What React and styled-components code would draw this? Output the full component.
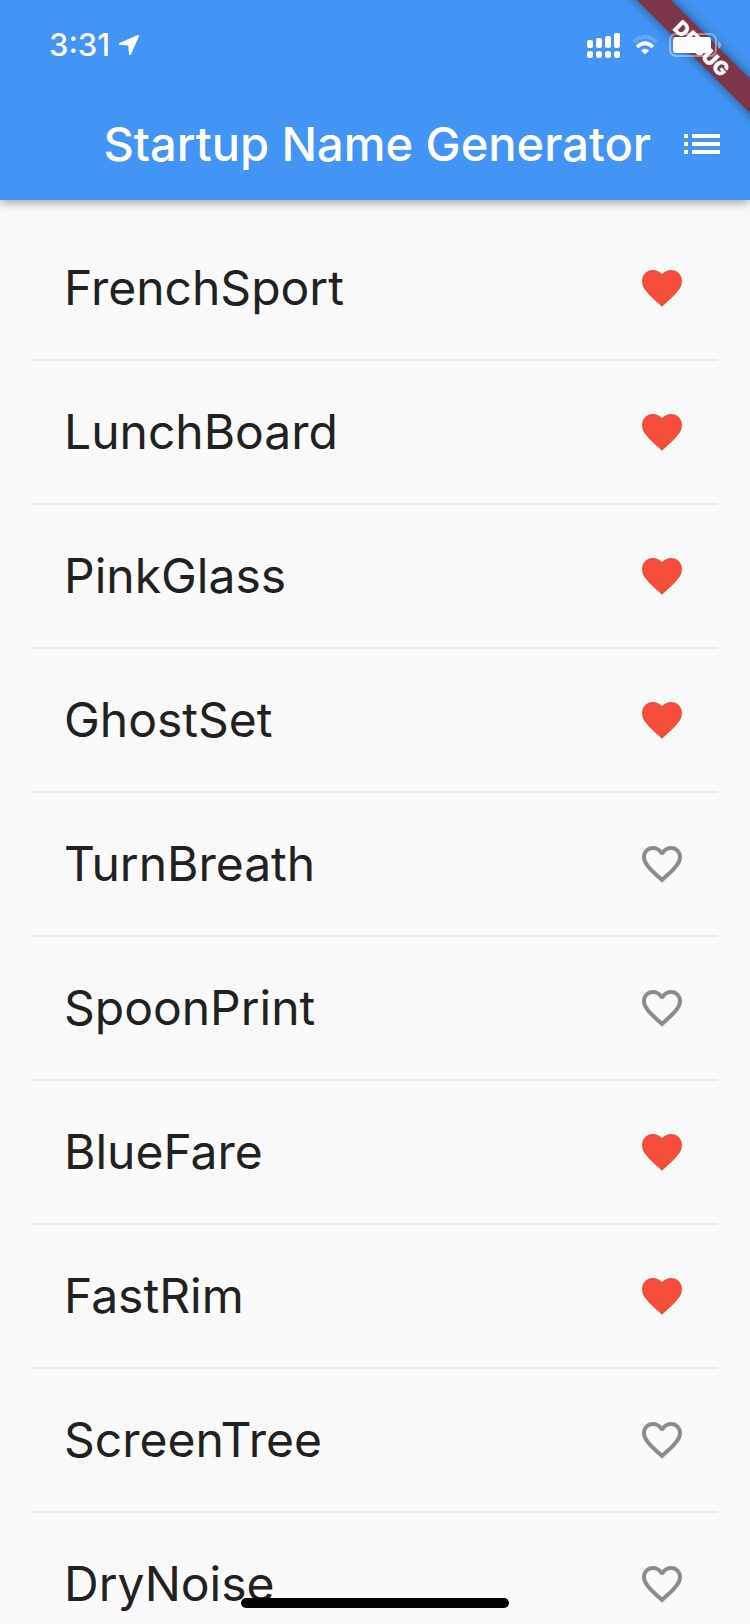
import React, { useState } from "react";
import styled, { createGlobalStyle } from "styled-components";

const GlobalStyle = createGlobalStyle`
  * { box-sizing: border-box; }
  html, body, #root { height: 100%; }
  body {
    margin: 0;
    background: #fafafa;
    font-family: Inter, "Liberation Sans", sans-serif;
    color: #212121;
  }
`;

const Screen = styled.div`
  position: relative;
  display: flex;
  flex-direction: column;
  height: 100vh;
  overflow: hidden;
`;

const Header = styled.header`
  position: relative;
  z-index: 1;
  flex: none;
  background: #4295f5;
  color: #fff;
  box-shadow: 0 2px 10px rgba(0, 0, 0, 0.4);
`;

const BannerCorner = styled.div`
  position: absolute;
  top: 0;
  right: 0;
  width: 160px;
  height: 160px;
  overflow: hidden;
  pointer-events: none;
`;

const Banner = styled.div`
  position: absolute;
  top: 36px;
  right: -52px;
  width: 200px;
  height: 24px;
  transform: rotate(45deg);
  background: #7d3549;
  box-shadow: 0 0 12px rgba(0, 0, 0, 0.5);
  font-size: 20px;
  line-height: 27px;
  font-weight: 900;
  text-align: center;
`;

const StatusBar = styled.div`
  position: relative;
  display: flex;
  align-items: center;
  justify-content: space-between;
  height: 88px;
  padding: 2px 28px 0 49px;
`;

const StatusGroup = styled.div`
  display: flex;
  align-items: center;
  gap: ${(p) => p.$gap}px;
`;

const Clock = styled.time`
  font-size: 31px;
  line-height: 36px;
  font-weight: 500;
`;

const Toolbar = styled.div`
  position: relative;
  display: flex;
  align-items: center;
  justify-content: flex-end;
  gap: 27px;
  height: 112px;
  padding-right: 24px;
`;

const Title = styled.h1`
  margin: 0;
  font-size: 47px;
  line-height: 60px;
  font-weight: 500;
  white-space: nowrap;
`;

const IconButton = styled.button`
  display: flex;
  padding: 0;
  border: 0;
  background: none;
  color: ${(p) => p.$color};
  cursor: pointer;
`;

const NameList = styled.ul`
  margin: 0;
  padding: 17px 32px 0;
  list-style: none;
`;

const NameRow = styled.li`
  display: flex;
  align-items: center;
  justify-content: space-between;
  height: 144px;
  padding: 0 32px;
  border-bottom: 2px solid #ebebeb;
`;

const Name = styled.span`
  font-size: 48px;
  line-height: 56px;
`;

const HomeIndicator = styled.div`
  position: absolute;
  z-index: 2;
  bottom: 16px;
  left: 50%;
  width: 268px;
  height: 10px;
  transform: translateX(-50%);
  border-radius: 5px;
  background: #000;
`;

const HEART =
  "M12 21.35l-1.45-1.32C5.4 15.36 2 12.28 2 8.5 2 5.42 4.42 3 7.5 3c1.74 0 3.41.81 4.5 2.09C13.09 3.81 14.76 3 16.5 3 19.58 3 22 5.42 22 8.5c0 3.78-3.4 6.86-8.55 11.54L12 21.35z";
const HEART_OUTLINE =
  "M16.5 3c-1.74 0-3.41.81-4.5 2.09C10.91 3.81 9.24 3 7.5 3 4.42 3 2 5.42 2 8.5c0 3.78 3.4 6.86 8.55 11.54L12 21.35l1.45-1.32C18.6 15.36 22 12.28 22 8.5 22 5.42 19.58 3 16.5 3zm-4.4 15.55l-.1.1-.1-.1C7.14 14.24 4 11.39 4 8.5 4 6.5 5.5 5 7.5 5c1.54 0 3.04.99 3.57 2.36h1.87C13.46 5.99 14.96 5 16.5 5c2 0 3.5 1.5 3.5 3.5 0 2.89-3.14 5.74-7.9 10.05z";
const LIST =
  "M3 13h2v-2H3v2zm0 4h2v-2H3v2zm0-8h2V7H3v2zm4 4h14v-2H7v2zm0 4h14v-2H7v2zM7 7v2h14V7H7z";

const MaterialIcon = ({ path }) => (
  <svg width="48" height="48" viewBox="0 0 24 24" fill="currentColor" aria-hidden="true">
    <path d={path} />
  </svg>
);

const LocationIcon = () => (
  <svg width="22" height="22" viewBox="0 0 22 22" fill="#fff" stroke="#fff" strokeWidth="2" strokeLinejoin="round" aria-hidden="true">
    <path d="M20 2 2 9.800l9.200.9.800 9.300z" />
  </svg>
);

const SignalIcon = () => (
  <svg width="34" height="26" viewBox="0 0 34 26" fill="#fff" aria-hidden="true">
    {[8, 6, 4, 1].map((top, i) => (
      <g key={top}>
        <rect x={i * 9} y={top} width="6" height={16 - top} rx="2" />
        <rect x={i * 9} y="19" width="6" height="7" rx="2.500" />
      </g>
    ))}
  </svg>
);

const WifiIcon = () => (
  <svg width="26" height="20" viewBox="0 0 26 20" fill="none" aria-hidden="true">
    <path d="M1.500 7Q13-3.500 24.500 7" stroke="#62a9fa" strokeWidth="4" />
    <path d="M5 12Q13 4.500 21 12" stroke="#fff" strokeWidth="3.600" />
    <path d="M9 15.500Q13 12 17 15.500L13 19.500z" fill="#fff" />
  </svg>
);

const BatteryIcon = () => (
  <svg width="53" height="24" viewBox="0 0 53 24" aria-hidden="true">
    <rect x="1" y="1" width="46" height="22" rx="6" fill="none" stroke="#fff" strokeOpacity=".4" strokeWidth="2" />
    <rect x="4" y="4" width="38" height="16" rx="3" fill="#fff" />
    <path d="M49 8c4 1 4 7 0 8z" fill="#fff" fillOpacity=".4" />
  </svg>
);

const NAMES = [
  ["FrenchSport", true],
  ["LunchBoard", true],
  ["PinkGlass", true],
  ["GhostSet", true],
  ["TurnBreath", false],
  ["SpoonPrint", false],
  ["BlueFare", true],
  ["FastRim", true],
  ["ScreenTree", false],
  ["DryNoise", false],
];

function NameItem({ name, initiallySaved }) {
  const [saved, setSaved] = useState(initiallySaved);
  return (
    <NameRow>
      <Name>{name}</Name>
      <IconButton
        type="button"
        $color={saved ? "#f44e3b" : "#8c8c8c"}
        aria-label={`Save ${name}`}
        aria-pressed={saved}
        onClick={() => setSaved(!saved)}
      >
        <MaterialIcon path={saved ? HEART : HEART_OUTLINE} />
      </IconButton>
    </NameRow>
  );
}

export default function App() {
  return (
    <Screen>
      <GlobalStyle />
      <Header>
        <BannerCorner>
          <Banner>DEBUG</Banner>
        </BannerCorner>
        <StatusBar>
          <StatusGroup $gap={8}>
            <Clock>3:31</Clock>
            <LocationIcon />
          </StatusGroup>
          <StatusGroup $gap={11}>
            <SignalIcon />
            <WifiIcon />
            <BatteryIcon />
          </StatusGroup>
        </StatusBar>
        <Toolbar>
          <Title>Startup Name Generator</Title>
          <IconButton type="button" $color="#fff" aria-label="Saved names">
            <MaterialIcon path={LIST} />
          </IconButton>
        </Toolbar>
      </Header>
      <NameList>
        {NAMES.map(([name, saved]) => (
          <NameItem key={name} name={name} initiallySaved={saved} />
        ))}
      </NameList>
      <HomeIndicator />
    </Screen>
  );
}
